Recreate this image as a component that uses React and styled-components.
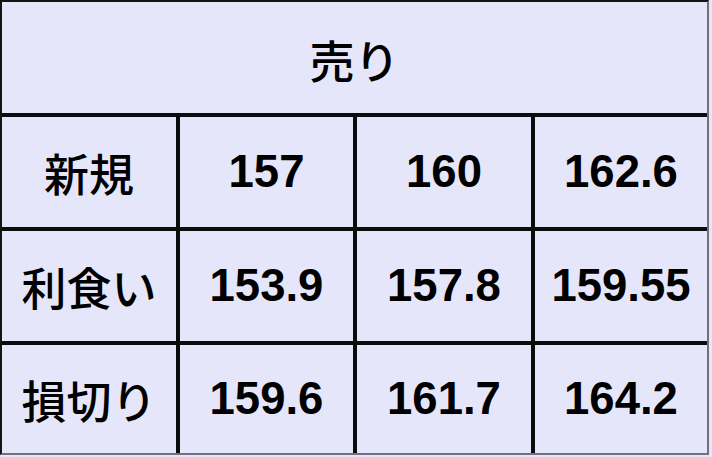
import React from "react";
import styled, { createGlobalStyle } from "styled-components";

const Global = createGlobalStyle`
  html, body { margin: 0; padding: 0; background: #e6e6fb; }
  body { font-family: "Liberation Sans", Arial, sans-serif; }
`;

const Table = styled.div`
  width: 709px;
  height: 455px;
  box-sizing: border-box;
  display: grid;
  grid-template-columns: 174px 173px 174px 172px;
  grid-template-rows: 111px 110px 110px 108px;
  gap: 4px;
  background: #0b0b0b;
  border-top: 2px solid #141414;
  border-left: 2px solid #141414;
  border-right: 2px solid #70707e;
  border-bottom: 2px solid #70707e;
`;

const Cell = styled.div`
  background: #e6e6fb;
  display: flex;
  align-items: center;
  justify-content: center;
  color: #000;
  grid-column: ${(p) => (p.$span ? `span ${p.$span}` : "auto")};
  font-family: ${(p) =>
    p.$jp
      ? `"Noto Sans CJK JP", "Noto Sans", sans-serif`
      : `"Liberation Sans", Arial, sans-serif`};
  font-weight: ${(p) => (p.$jp ? 500 : 700)};
  font-size: ${(p) => (p.$jp ? "45px" : "45.5px")};
  padding-top: ${(p) => (p.$head ? "4px" : "0")};
  box-sizing: border-box;
  line-height: 1;
`;

const rows = [
  ["新規", "157", "160", "162.6"],
  ["利食い", "153.9", "157.8", "159.55"],
  ["損切り", "159.6", "161.7", "164.2"],
];

export default function App() {
  return (
    <>
      <Global />
      <Table>
        <Cell $span={4} $jp $head>
          売り
        </Cell>
        {rows.map((r) =>
          r.map((v, i) => (
            <Cell key={r[0] + i} $jp={i === 0}>
              {v}
            </Cell>
          ))
        )}
      </Table>
    </>
  );
}
